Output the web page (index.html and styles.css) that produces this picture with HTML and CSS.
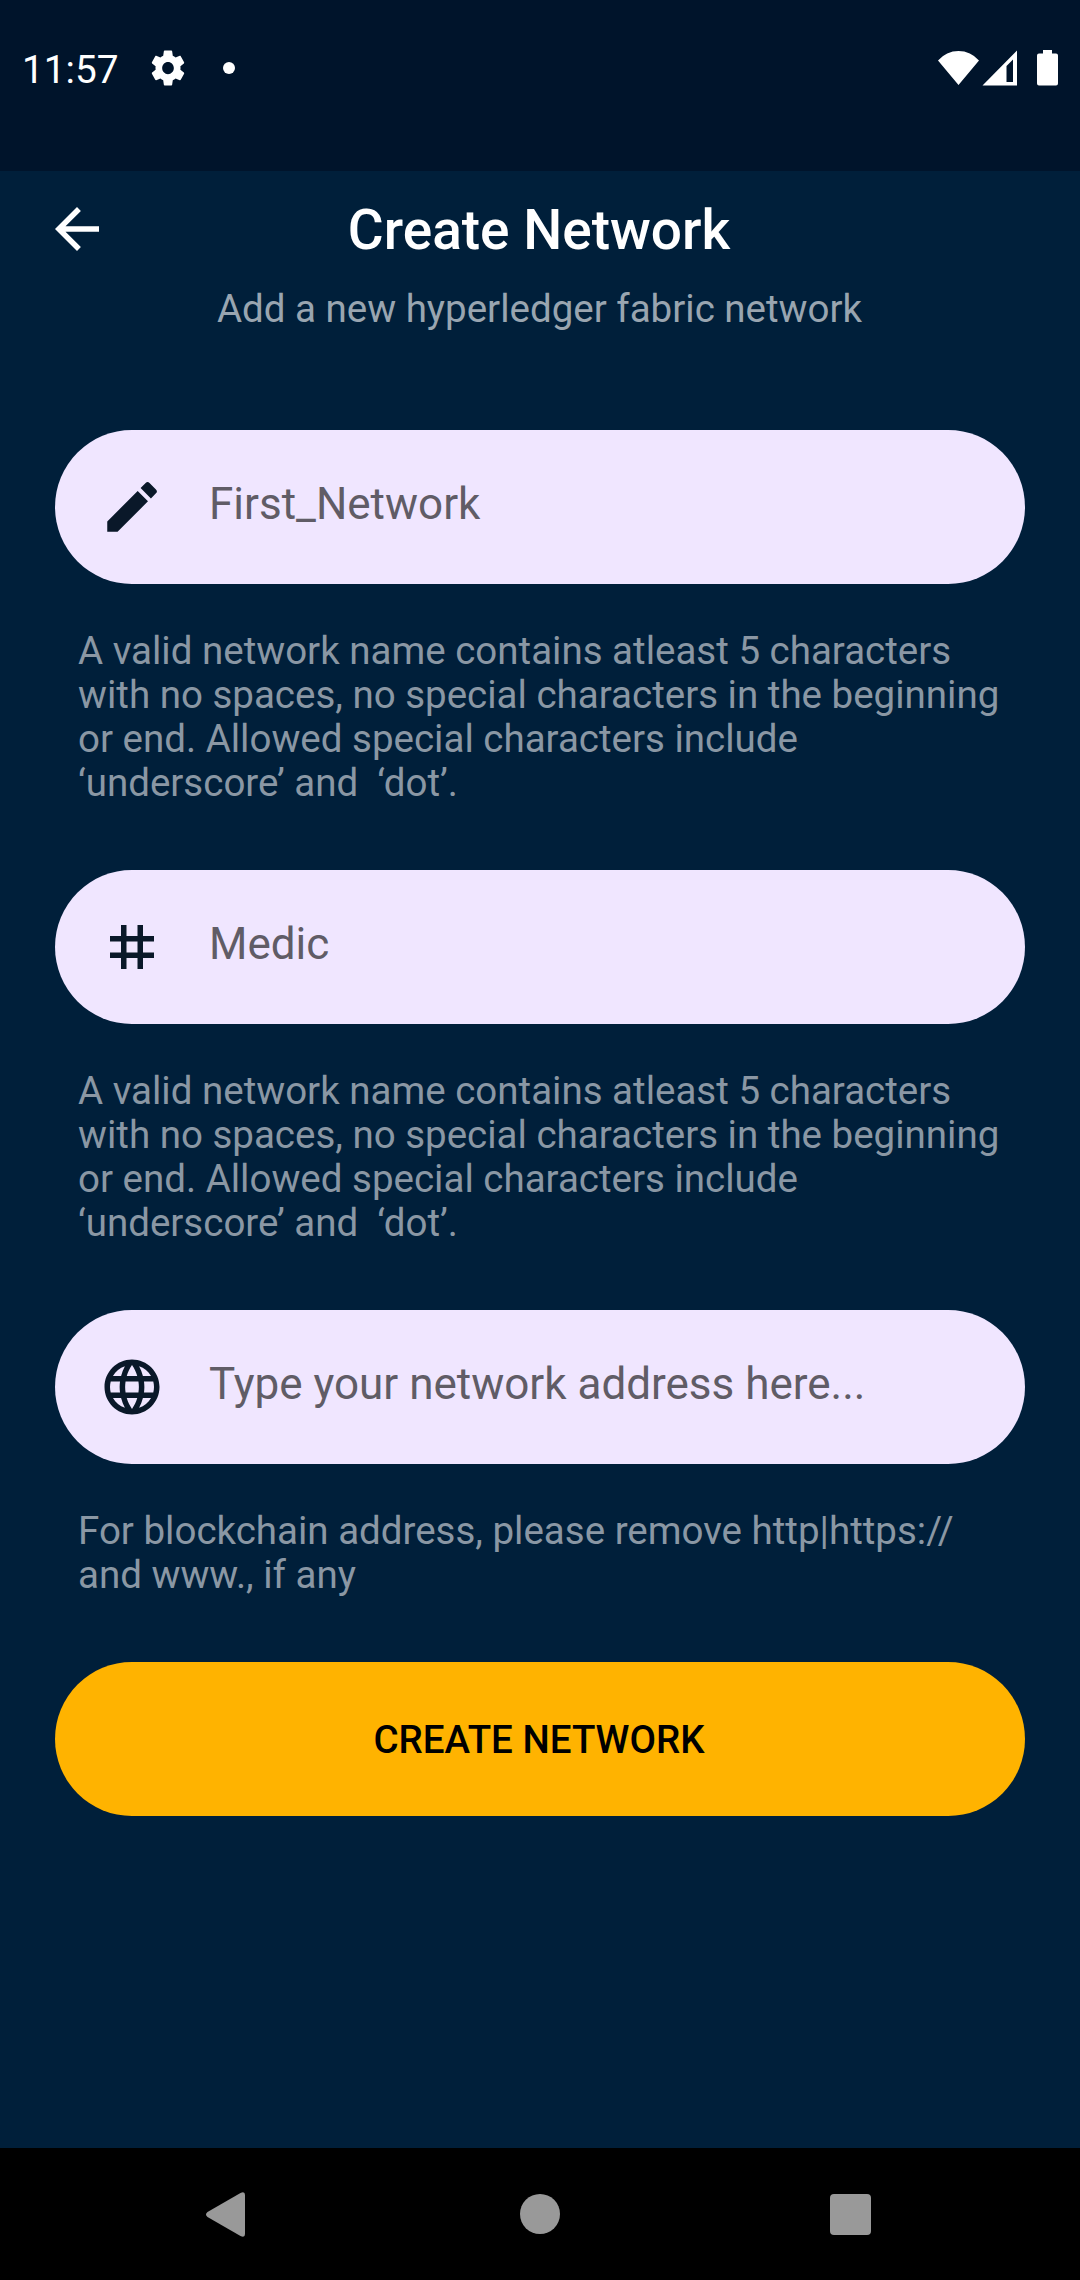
FILE: index.html
```html
<!DOCTYPE html>
<html lang="en">
<head>
<meta charset="utf-8">
<title>Create Network</title>
<link rel="stylesheet" href="styles.css">
</head>
<body>
<div class="screen">
  <header class="status">
    <span class="clock">11:57</span>
    <svg class="gear" viewBox="0 0 24 24" preserveAspectRatio="none"><path d="M19.43 12.98c.04-.32.07-.64.07-.98s-.03-.66-.07-.98l2.11-1.65c.19-.15.24-.42.12-.64l-2-3.46c-.12-.22-.39-.3-.61-.22l-2.49 1c-.52-.4-1.08-.73-1.69-.98l-.38-2.65C14.46 2.18 14.25 2 14 2h-4c-.25 0-.46.18-.49.42l-.38 2.65c-.61.25-1.17.59-1.69.98l-2.49-1c-.23-.09-.49 0-.61.22l-2 3.46c-.13.22-.07.49.12.64l2.11 1.65c-.04.32-.07.65-.07.98s.03.66.07.98l-2.11 1.65c-.19.15-.24.42-.12.64l2 3.46c.12.22.39.3.61.22l2.49-1c.52.4 1.08.73 1.69.98l.38 2.65c.03.24.24.42.49.42h4c.25 0 .46-.18.49-.42l.38-2.65c.61-.25 1.17-.59 1.69-.98l2.49 1c.23.09.49 0 .61-.22l2-3.46c.12-.22.07-.49-.12-.64l-2.11-1.65zM12 15.5c-1.93 0-3.5-1.57-3.5-3.5s1.57-3.5 3.5-3.5 3.5 1.57 3.5 3.5-1.57 3.5-3.5 3.5z"/></svg>
    <span class="dot"></span>
    <svg class="signals" viewBox="0 0 120 36"><path d="M0 10.500A27 27 0 0 1 41 10.500L20.500 35zM44.500 35.500 79 .500v35zM68.500 32h6.500V9.500l-6.500 6.500zM105 0h9v3.500h4q2 0 2 2v28q0 2-2 2h-17q-2 0-2-2v-28q0-2 2-2h4z" fill-rule="evenodd"/></svg>
  </header>
  <main class="content">
    <div class="titlebar">
      <svg class="icon" viewBox="0 0 24 24"><path d="M20 11H7.830l5.590-5.590L12 4l-8 8 8 8 1.410-1.410L7.830 13H20z"/></svg>
      <h1 class="title">Create Network</h1>
    </div>
    <p class="subtitle">Add a new hyperledger fabric network</p>
    <form class="form">
      <label class="field">
        <svg class="icon" viewBox="0 0 24 24"><path d="M3 17.250V21h3.750L17.810 9.940l-3.750-3.750zM20.710 7.040a1 1 0 0 0 0-1.410l-2.340-2.340a1 1 0 0 0-1.410 0l-1.830 1.830 3.750 3.750z"/></svg>
        <span class="hint">First_Network</span>
      </label>
      <p class="help">A valid network name contains atleast 5 characters<br>with no spaces, no special characters in the beginning<br>or end. Allowed special characters include<br>‘underscore’ and&nbsp; ‘dot’.</p>
      <label class="field">
        <svg class="icon" viewBox="0 0 24 24"><path d="M20 10V8h-4V4h-2v4h-4V4H8v4H4v2h4v4H4v2h4v4h2v-4h4v4h2v-4h4v-2h-4v-4zM14 14h-4v-4h4z"/></svg>
        <span class="hint">Medic</span>
      </label>
      <p class="help">A valid network name contains atleast 5 characters<br>with no spaces, no special characters in the beginning<br>or end. Allowed special characters include<br>‘underscore’ and&nbsp; ‘dot’.</p>
      <label class="field">
        <svg class="icon" viewBox="0 0 24 24"><path d="M11.99 2C6.47 2 2 6.48 2 12s4.470 10 9.990 10C17.520 22 22 17.520 22 12S17.520 2 11.990 2zm6.930 6h-2.950c-.32-1.250-.78-2.450-1.380-3.560 1.840.63 3.370 1.910 4.330 3.560zM12 4.040c.83 1.200 1.480 2.530 1.910 3.960h-3.820c.43-1.430 1.080-2.760 1.910-3.960zM4.260 14C4.100 13.360 4 12.690 4 12s.1-1.360.26-2h3.380c-.08.66-.14 1.320-.14 2s.06 1.340.14 2zm.82 2h2.950c.32 1.250.78 2.450 1.380 3.560-1.840-.63-3.370-1.900-4.330-3.560zm2.950-8H5.080c.96-1.660 2.490-2.930 4.330-3.560C8.810 5.550 8.350 6.750 8.030 8zM12 19.960c-.83-1.200-1.480-2.530-1.910-3.960h3.820c-.43 1.430-1.080 2.760-1.910 3.960zM14.340 14H9.660c-.09-.66-.16-1.320-.16-2s.07-1.350.16-2h4.680c.09.65.16 1.320.16 2s-.07 1.340-.16 2zm.25 5.560c.6-1.110 1.060-2.310 1.380-3.560h2.950c-.96 1.650-2.490 2.930-4.330 3.560zM16.360 14c.08-.66.14-1.320.14-2s-.06-1.340-.14-2h3.380c.16.64.26 1.310.26 2s-.1 1.360-.26 2z"/></svg>
        <span class="hint">Type your network address here...</span>
      </label>
      <p class="help">For blockchain address, please remove http|https://<br>and www., if any</p>
      <button class="submit" type="button">CREATE NETWORK</button>
    </form>
  </main>
  <nav class="navbar">
    <svg class="nav-back" viewBox="0 0 39 45"><path d="M34.500 1Q39-1 39 3v39q0 4-4.500 2L1.500 25q-3-2.500 0-5z"/></svg>
    <span class="nav-home"></span>
    <span class="nav-recent"></span>
  </nav>
</div>
</body>
</html>
```
FILE: styles.css
```css
* { box-sizing: border-box; margin: 0; }
body { font-family: Roboto, sans-serif; background: #001f3a; }
svg { display: block; flex: none; }
.screen { display: flex; flex-direction: column; width: 1080px; height: 2280px; }
.status { display: flex; align-items: center; height: 171px; padding: 0 22px 36px; background: #00142b; color: #fff; fill: #fff; }
.clock { width: 126px; padding-top: 3px; font-size: 38.8px; }
.gear { width: 40px; height: 42px; }
.dot { width: 12px; height: 12px; margin-left: 35px; border-radius: 50%; background: #fff; }
.signals { width: 120px; height: 36px; margin-left: auto; }
.content { flex: 1; padding: 25px 55px 0; }
.icon { width: 66px; height: 66px; }
.titlebar { display: grid; grid-template-columns: 66px 1fr 66px; align-items: center; height: 66px; margin: 0 -11px; fill: #fff; }
.title { padding: 2px 2px 0 0; text-align: center; font-size: 55px; line-height: 64px; font-weight: 500; color: #fff; }
.subtitle { margin-top: 25px; padding-right: 1px; text-align: center; font-size: 38.5px; line-height: 44px; color: #99a5b0; }
.form { margin-top: 99px; }
.field { display: flex; align-items: center; height: 154px; padding-left: 44px; border-radius: 77px; background: #f0e6ff; fill: #0a1829; }
.hint { margin-left: 44px; padding-bottom: 6px; font-size: 44px; line-height: 52px; color: #605c66; white-space: nowrap; }
.help { padding: 45px 0 65px 23px; font-size: 38.5px; line-height: 44px; color: #8a97a4; white-space: nowrap; }
.submit { display: block; width: 100%; height: 154px; padding: 0 2px 0 0; border: 0; border-radius: 77px; background: #ffb300; font: 500 38.5px Roboto, sans-serif; color: #000; }
.navbar { display: flex; align-items: center; justify-content: space-between; height: 132px; padding: 0 209px 0 206px; background: #000; fill: #999; }
.nav-back { width: 39px; height: 45px; }
.nav-home { width: 40px; height: 40px; margin-left: 5px; border-radius: 50%; background: #999; }
.nav-recent { width: 41px; height: 41px; border-radius: 4px; background: #999; }
```
